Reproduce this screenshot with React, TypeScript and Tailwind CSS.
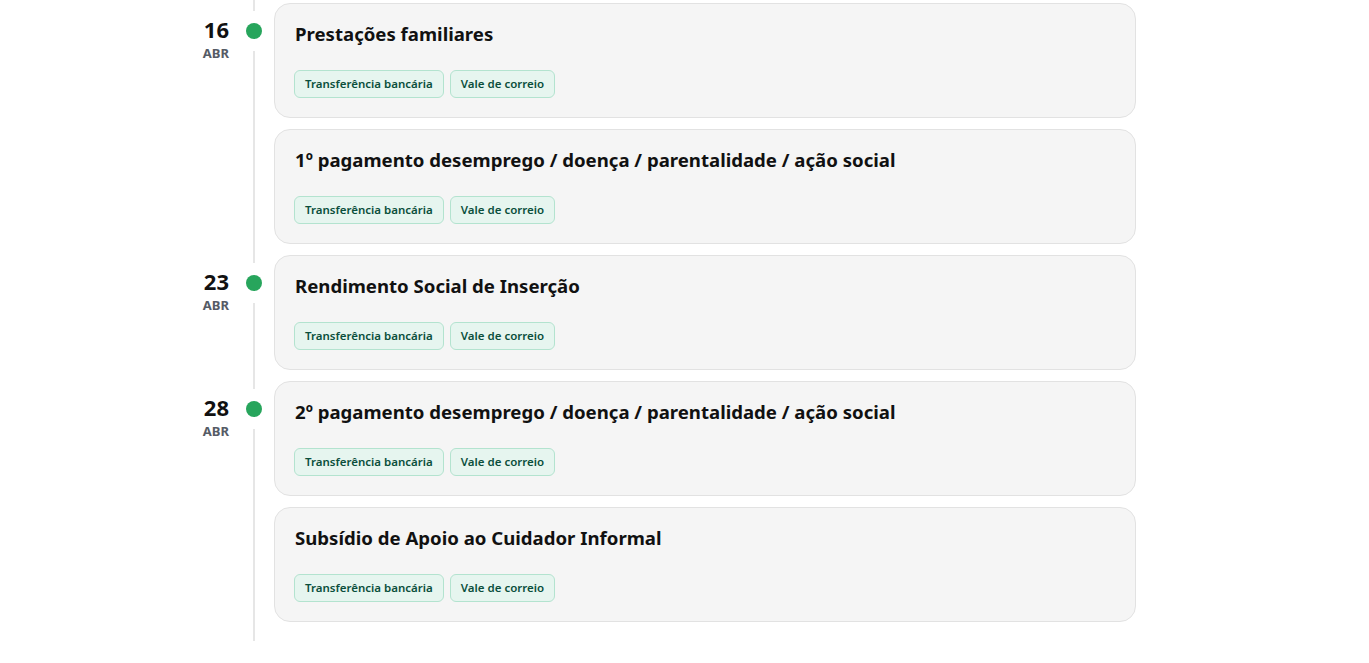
const pagamentos = [
  {
    dia: "16",
    mes: "ABR",
    itens: [
      "Prestações familiares",
      "1º pagamento desemprego / doença / parentalidade / ação social",
    ],
  },
  { dia: "23", mes: "ABR", itens: ["Rendimento Social de Inserção"] },
  {
    dia: "28",
    mes: "ABR",
    itens: [
      "2º pagamento desemprego / doença / parentalidade / ação social",
      "Subsídio de Apoio ao Cuidador Informal",
    ],
  },
]

const metodos = ["Transferência bancária", "Vale de correio"]

const Tag = ({ label }: { label: string }) => (
  <span className="flex h-[28px] items-center rounded-md border border-[#b3e3cf] bg-[#e6f5ef] px-[10px] text-[11.5px] font-semibold text-[#0b4f3c]">
    {label}
  </span>
)

const Cartao = ({ titulo }: { titulo: string }) => (
  <div className="h-[115px] rounded-2xl border border-[#e2e2e2] bg-[#f5f5f5] pl-[19px] pr-5 pt-[15px]">
    <div className="pl-px text-[18.6px] font-bold leading-[30px] text-[#111111]">{titulo}</div>
    <div className="mt-[21px] flex gap-[6px]">
      {metodos.map((m) => (
        <Tag key={m} label={m} />
      ))}
    </div>
  </div>
)

export default function App() {
  return (
    <div className="min-h-screen bg-white font-['Noto_Sans',sans-serif]">
      <div className="relative ml-[190px] w-[946px] pb-[19px] pt-[3px]">
        {/* linha vertical da cronologia */}
        <div className="absolute bottom-0 left-[63px] top-0 w-[2px] bg-[#e6e6e6]" />
        <div className="flex flex-col gap-[11px]">
          {pagamentos.map((g) => (
            <div key={g.dia} className="flex">
              <div className="relative w-[84px] shrink-0">
                <div className="absolute right-[45px] top-[12px] flex flex-col items-end">
                  <span className="text-[22px] font-bold leading-[28px] text-[#111111]">{g.dia}</span>
                  <span className="mt-[2px] text-[13px] font-bold leading-[16px] text-[#555b66]">{g.mes}</span>
                </div>
                <div className="absolute left-[56px] top-[20px] h-4 w-4 rounded-full bg-[#27a55c] ring-[12px] ring-white" />
              </div>
              <div className="flex flex-1 flex-col gap-[11px]">
                {g.itens.map((t) => (
                  <Cartao key={t} titulo={t} />
                ))}
              </div>
            </div>
          ))}
        </div>
      </div>
    </div>
  )
}
